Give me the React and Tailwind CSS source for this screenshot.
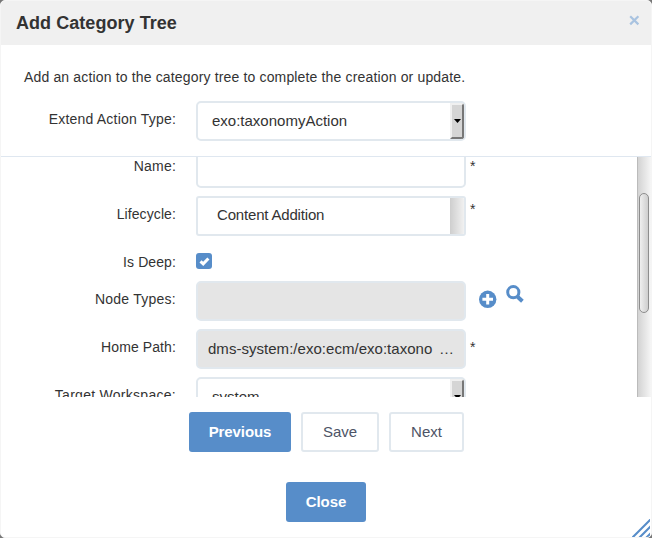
import React from "react";

function Label({ children, spacing = "" }) {
  return (
    <div className={`mr-5 w-[175px] shrink-0 pt-2 text-right text-[14px] leading-5 whitespace-nowrap ${spacing}`}>
      {children}
    </div>
  );
}

function Row({ label, spacing, children, className = "h-10" }) {
  return (
    <div className={`flex shrink-0 items-start ${className}`}>
      <Label spacing={spacing}>{label}</Label>
      {children}
    </div>
  );
}

function Required({ className = "" }) {
  return <span className={`ml-1 text-[14px] leading-5 ${className}`}>*</span>;
}

function Select({ value }) {
  return (
    <div className="flex h-10 w-[270px] shrink-0 overflow-hidden rounded-[5px] border-2 border-[#e1e8ee] bg-white">
      <span className="flex-1 pl-[14px] text-[15px] leading-9">{value}</span>
      <span className="flex h-9 w-[14px] items-center justify-center border-t-2 border-r-2 border-b-2 border-l-2 border-t-[#f0f0f0] border-r-[#777] border-b-[#777] border-l-[#f0f0f0] bg-[#d5d5d5]">
        <svg width="7" height="4" viewBox="0 0 7 4" className="shrink-0">
          <path d="M0 0h7L3.5 4z" fill="#000" />
        </svg>
      </span>
    </div>
  );
}

function PlusIcon() {
  return (
    <svg width="18" height="18" viewBox="0 0 18 18" className="mt-[9px] ml-[13px] shrink-0">
      <circle cx="8.7" cy="9.3" r="8.7" fill="#578dc9" />
      <path d="M7.2 4h3v3.8H14v3h-3.8v3.8h-3v-3.8H3.4v-3h3.8z" fill="#fff" />
    </svg>
  );
}

function SearchIcon() {
  return (
    <svg width="18" height="18" viewBox="0 0 18 18" className="mt-1 ml-[9px] shrink-0" fill="none" stroke="#578dc9">
      <circle cx="7.3" cy="7.2" r="5.6" strokeWidth="3" />
      <path d="M10.8 10.8l2 1.7" strokeWidth="3" />
      <path d="M11.8 12.1l4.6 4.2" strokeWidth="4" />
    </svg>
  );
}

const primary = "h-10 rounded-[3px] bg-[#578dc9] text-[15px] font-bold leading-10 tracking-[-0.1px] text-white";
const secondary = "h-10 rounded-[3px] border-2 border-[#e1e8ee] bg-white text-[15px] leading-9 text-[#4d5466]";

export default function App() {
  return (
    <div className="h-[538px] w-[652px] overflow-hidden bg-[#777] font-['Liberation_Sans',Arial,sans-serif] text-[#333]">
      <div className="relative flex h-full flex-col overflow-hidden rounded-[5px] border border-[#f5f5f5] bg-white">
        <header className="flex h-11 shrink-0 justify-between bg-[#f0f0f0] pr-[10px] pl-[15px]">
          <h1 className="pt-[10px] text-[18px] leading-6 font-bold tracking-[0.05px]">Add Category Tree</h1>
          <button className="flex h-[38px] items-center pt-px" aria-label="Close dialog">
            <svg width="11" height="11" viewBox="0 0 11 11" stroke="#a9c3e0" strokeWidth="2.2" className="mr-px">
              <path d="M1.2 1.2l8.2 8.2M9.4 1.2l-8.2 8.2" />
            </svg>
          </button>
        </header>

        <section className="h-28 shrink-0 border-b border-[#dfe7f0] pt-[22px]">
          <p className="h-[34px] pl-[23px] text-[14px] leading-5 tracking-[0.155px] whitespace-nowrap">
            Add an action to the category tree to complete the creation or update.
          </p>
          <Row label="Extend Action Type:" spacing="tracking-[0.2px]">
            <Select value="exo:taxonomyAction" />
          </Row>
        </section>

        <section className="flex h-60 shrink-0 overflow-hidden">
          <div className="-mt-[9px] flex min-w-0 flex-1 flex-col">
            <Row label="Name:" spacing="tracking-[0.2px]">
              <div className="h-10 w-[270px] shrink-0 rounded-[5px] border-2 border-[#e1e8ee]" />
              <Required className="pt-[8px]" />
            </Row>
            <Row label="Lifecycle:" spacing="tracking-[0.1px]" className="mt-2 h-10">
              <div className="flex h-10 w-[270px] shrink-0 overflow-hidden rounded-[3px] border-2 border-[#e1e8ee]">
                <span className="flex-1 pl-[19px] text-[15px] leading-[34px] tracking-[-0.18px]">Content Addition</span>
                <span className="w-[14px] bg-linear-to-r from-[#cecece] to-[#f1f1f1]" />
              </div>
              <Required className="pt-[3px]" />
            </Row>
            <Row label="Is Deep:" spacing="tracking-[0.1px]" className="mt-2 h-[29px]">
              <span className="mt-[9px] flex size-4 items-center justify-center rounded-[3px] bg-[#578dc9]">
                <svg width="11" height="9" viewBox="0 0 11 9" fill="none" stroke="#fff" strokeWidth="3">
                  <path d="M1.5 4.3l2.7 2.5 5.2-5.3" />
                </svg>
              </span>
            </Row>
            <Row label="Node Types:" spacing="tracking-[0.25px]" className="mt-2 h-10">
              <div className="h-10 w-[270px] shrink-0 rounded-[5px] border-2 border-[#e1e8ee] bg-[#e5e5e5]" />
              <PlusIcon />
              <SearchIcon />
            </Row>
            <Row label="Home Path:" spacing="tracking-[0.1px]" className="mt-2 h-10">
              <div className="flex h-10 w-[270px] shrink-0 justify-between rounded-[5px] border-2 border-[#e1e8ee] bg-[#e5e5e5] px-[10px] text-[15px] leading-9">
                <span className="tracking-[0.03px]">dms-system:/exo:ecm/exo:taxono</span>
                <span>…</span>
              </div>
              <Required className="pt-[8px]" />
            </Row>
            <Row label="Target Workspace:" spacing="tracking-[0.28px]" className="mt-2 h-10">
              <Select value="system" />
            </Row>
          </div>
          <div className="flex w-[14px] shrink-0 justify-start border-l border-[#bbb] bg-linear-to-r from-[#d3d3d3] to-[#f6f6f6] pl-px">
            <div className="mt-9 h-[120px] w-[10px] rounded-[5px] border border-[#8d8d8d] bg-linear-to-r from-[#efefef] to-[#cecece]" />
          </div>
        </section>

        <div className="mt-[15px] flex shrink-0 gap-[10px] pl-[188px]">
          <button className={`${primary} w-[102px]`}>Previous</button>
          <button className={`${secondary} w-[78px]`}>Save</button>
          <button className={`${secondary} w-[75px]`}>Next</button>
        </div>
        <div className="mt-[30px] flex shrink-0 justify-center">
          <button className={`${primary} w-20`}>Close</button>
        </div>
        <svg width="18" height="18" viewBox="0 0 18 18" className="absolute right-[1px] bottom-0" stroke="#578dc9" strokeWidth="2.1">
          <path d="M0 19L19 0M7 19L19 7M14 19l5-5" />
        </svg>
      </div>
    </div>
  );
}
